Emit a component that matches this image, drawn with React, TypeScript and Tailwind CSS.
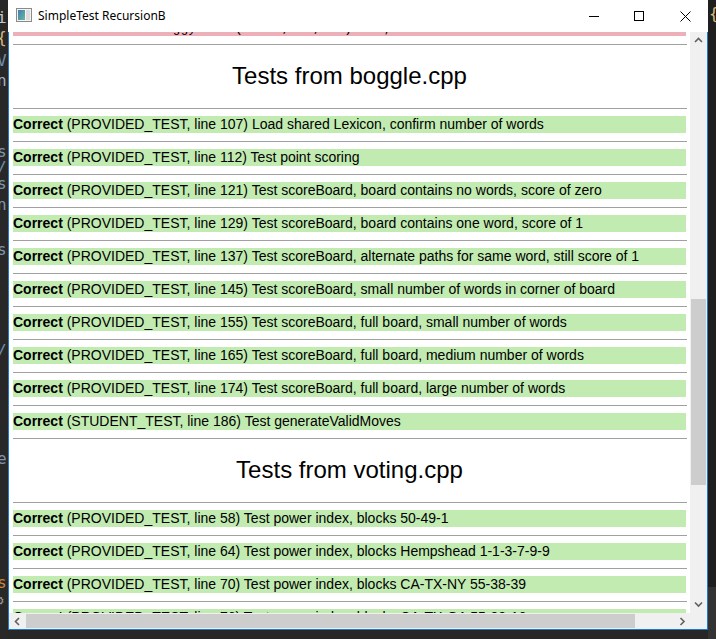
import React from "react";

type Row = { kind: string; line: number; name: string };

const boggle: Row[] = [
  { kind: "PROVIDED_TEST", line: 107, name: "Load shared Lexicon, confirm number of words" },
  { kind: "PROVIDED_TEST", line: 112, name: "Test point scoring" },
  { kind: "PROVIDED_TEST", line: 121, name: "Test scoreBoard, board contains no words, score of zero" },
  { kind: "PROVIDED_TEST", line: 129, name: "Test scoreBoard, board contains one word, score of 1" },
  { kind: "PROVIDED_TEST", line: 137, name: "Test scoreBoard, alternate paths for same word, still score of 1" },
  { kind: "PROVIDED_TEST", line: 145, name: "Test scoreBoard, small number of words in corner of board" },
  { kind: "PROVIDED_TEST", line: 155, name: "Test scoreBoard, full board, small number of words" },
  { kind: "PROVIDED_TEST", line: 165, name: "Test scoreBoard, full board, medium number of words" },
  { kind: "PROVIDED_TEST", line: 174, name: "Test scoreBoard, full board, large number of words" },
  { kind: "STUDENT_TEST", line: 186, name: "Test generateValidMoves" },
];

const voting: Row[] = [
  { kind: "PROVIDED_TEST", line: 58, name: "Test power index, blocks 50-49-1" },
  { kind: "PROVIDED_TEST", line: 64, name: "Test power index, blocks Hempshead 1-1-3-7-9-9" },
  { kind: "PROVIDED_TEST", line: 70, name: "Test power index, blocks CA-TX-NY 55-38-39" },
  { kind: "PROVIDED_TEST", line: 76, name: "Test power index, blocks CA-TX-GA 55-38-16" },
];

function Hr() {
  return <div className="h-px bg-[#a0a0a0] mr-[-1px]" />;
}

function Result({ row }: { row: Row }) {
  return (
    <>
      <div className="mt-[7px] h-[17px] bg-[#c2ebb2] text-[14px] leading-[17px] text-black whitespace-nowrap">
        <span className="font-bold">Correct</span> ({row.kind}, line {row.line}) {row.name}
      </div>
      <div className="mt-[8px]">
        <Hr />
      </div>
    </>
  );
}

function Section({ title, rows }: { title: string; rows: Row[] }) {
  return (
    <>
      <div className="h-[63px] flex items-center justify-center pb-[1px] text-[24px] text-black">
        {title}
      </div>
      <Hr />
      {rows.map((r) => (
        <Result key={r.line} row={r} />
      ))}
    </>
  );
}

function Chevron({ dir }: { dir: "up" | "down" | "left" | "right" }) {
  const d = {
    up: "M1 5 L4.5 1.5 L8 5",
    down: "M1 1.5 L4.5 5 L8 1.5",
    left: "M5 1 L1.5 4.5 L5 8",
    right: "M1.5 1 L5 4.5 L1.5 8",
  }[dir];
  const vertical = dir === "up" || dir === "down";
  return (
    <svg width={vertical ? 9 : 7} height={vertical ? 7 : 9} viewBox={vertical ? "0 0 9 7" : "0 0 7 9"}>
      <path d={d} fill="none" stroke="#606060" strokeWidth="1.6" />
    </svg>
  );
}

function AppIcon() {
  return (
    <svg width="16" height="14" viewBox="0 0 16 14">
      <defs>
        <linearGradient id="ic" x1="0" y1="0" x2="1" y2="1">
          <stop offset="0" stopColor="#3a7fb8" />
          <stop offset="1" stopColor="#6fb59a" />
        </linearGradient>
      </defs>
      <rect x="0.5" y="0.5" width="15" height="13" fill="#f4f4f4" stroke="#8a8a8a" />
      <rect x="2" y="2" width="7" height="10" fill="url(#ic)" />
      <rect x="10" y="2" width="4" height="10" fill="#dcdcdc" />
    </svg>
  );
}

function EdgeGlyphs() {
  const glyphs: [number, string, string][] = [
    [10, "i", "text-[#c8c8c8]"],
    [30, "{", "text-[#d7ba7d]"],
    [53, "V", "text-[#6b8fb3]"],
    [73, "n", "text-[#9cb0c8]"],
    [144, "s", "text-[#7f95ad]"],
    [160, "/", "text-[#6b8fb3]"],
    [176, "s", "text-[#7f95ad]"],
    [197, "n", "text-[#7f95ad]"],
    [242, "s", "text-[#7f95ad]"],
    [343, "/", "text-[#6b8fb3]"],
    [451, "e", "text-[#7f95ad]"],
    [575, "s", "text-[#c5863a]"],
  ];
  return (
    <div className="relative w-[8px] h-full shrink-0 bg-[#282828] overflow-hidden font-['DejaVu_Sans_Mono',monospace] text-[16px] leading-[16px]">
      {glyphs.map(([y, c, col]) => (
        <span key={y} className={`absolute left-[-3px] ${col}`} style={{ top: y }}>
          {c}
        </span>
      ))}
      <span className="absolute left-[-5px] top-[592px] text-[#9a9a9a] text-[14px]">⚙</span>
    </div>
  );
}

export default function App() {
  return (
    <div className="w-[716px] h-[639px] bg-[#272727] flex overflow-hidden font-['Liberation_Sans',Arial,sans-serif]">
      <EdgeGlyphs />
      <div className="w-[700px] shrink-0 flex flex-col">
        {/* title bar */}
        <div className="h-[32px] bg-white flex items-center shrink-0">
          <div className="ml-[8px] mt-[-2px]">
            <AppIcon />
          </div>
          <span className="ml-[6px] mt-[-1px] text-[12px] text-black font-['Noto_Sans',sans-serif]">
            SimpleTest RecursionB
          </span>
          <div className="ml-auto flex h-full">
            <div className="w-[46px] flex items-center justify-center pl-[2px]">
              <svg width="10" height="10" viewBox="0 0 10 10">
                <path d="M0 5.5 H10" stroke="#000" strokeWidth="1" />
              </svg>
            </div>
            <div className="w-[46px] flex items-center justify-center">
              <svg width="10" height="10" viewBox="0 0 10 10">
                <rect x="0.5" y="0.5" width="9" height="9" fill="none" stroke="#000" strokeWidth="1" />
              </svg>
            </div>
            <div className="w-[46px] flex items-center justify-center">
              <svg width="11" height="11" viewBox="0 0 11 11">
                <path d="M0.5 0.5 L10.5 10.5 M10.5 0.5 L0.5 10.5" stroke="#000" strokeWidth="1" />
              </svg>
            </div>
          </div>
        </div>
        {/* window body */}
        <div className="h-[598px] flex flex-col border-x border-b border-[#1c7ad2]">
          <div className="flex-1 flex min-h-0">
            <div className="flex-1 bg-white overflow-hidden px-[4px]">
              <div className="-mt-[13px]">
                <div className="h-[17px] bg-[#eeb0b8] pl-[144px] pt-[3px] text-[13px] leading-[14px] text-black font-['Liberation_Mono',monospace] whitespace-nowrap overflow-hidden">
                  boggyScore(fname, "0, "0) == ;
                </div>
                <div className="mt-[8px]">
                  <Hr />
                </div>
                <Section title="Tests from boggle.cpp" rows={boggle} />
                <Section title="Tests from voting.cpp" rows={voting} />
              </div>
            </div>
            <div className="w-[17px] bg-[#f0f0f0] flex flex-col items-center shrink-0">
              <div className="h-[17px] flex items-center justify-center">
                <Chevron dir="up" />
              </div>
              <div className="flex-1 w-full flex flex-col">
                <div className="h-[250px]" />
                <div className="h-[186px] mx-[1px] bg-[#cdcdcd]" />
              </div>
              <div className="h-[17px] flex items-center justify-center">
                <Chevron dir="down" />
              </div>
            </div>
          </div>
          <div className="h-[16px] flex shrink-0 bg-[#f0f0f0]">
            <div className="w-[17px] flex items-center justify-center">
              <Chevron dir="left" />
            </div>
            <div className="w-[609px] my-[1px] bg-[#cdcdcd]" />
            <div className="flex-1 flex items-center justify-end pr-[4px]">
              <Chevron dir="right" />
            </div>
            <div className="w-[17px]" />
          </div>
        </div>
      </div>
      <div className="flex-1 flex flex-col bg-[#1f1f1f]">
        <div className="h-[40px] pl-[1px] pt-[4px] text-[#d7ba7d] text-[16px] font-['DejaVu_Sans_Mono',monospace] leading-[20px]">
          {"{"}
        </div>
        <div className="flex-1" />
        <div className="h-[52px] bg-[#333333]" />
      </div>
    </div>
  );
}
